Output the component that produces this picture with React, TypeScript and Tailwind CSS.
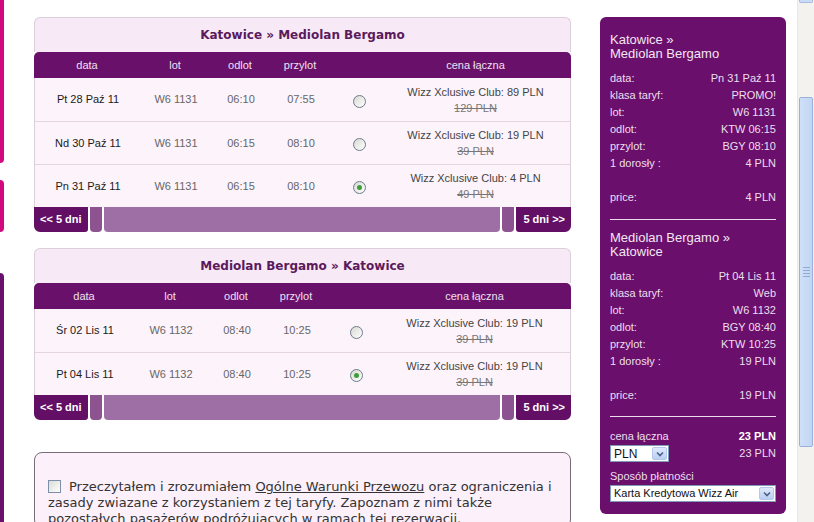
import React from 'react';

type Flight = {
  date: string;
  flight: string;
  dep: string;
  arr: string;
  price: string;
  old: string;
  selected: boolean;
};

const outbound: Flight[] = [
  { date: 'Pt 28 Paź 11', flight: 'W6 1131', dep: '06:10', arr: '07:55', price: 'Wizz Xclusive Club: 89 PLN', old: '129 PLN', selected: false },
  { date: 'Nd 30 Paź 11', flight: 'W6 1131', dep: '06:15', arr: '08:10', price: 'Wizz Xclusive Club: 19 PLN', old: '39 PLN', selected: false },
  { date: 'Pn 31 Paź 11', flight: 'W6 1131', dep: '06:15', arr: '08:10', price: 'Wizz Xclusive Club: 4 PLN', old: '49 PLN', selected: true },
];

const inbound: Flight[] = [
  { date: 'Śr 02 Lis 11', flight: 'W6 1132', dep: '08:40', arr: '10:25', price: 'Wizz Xclusive Club: 19 PLN', old: '39 PLN', selected: false },
  { date: 'Pt 04 Lis 11', flight: 'W6 1132', dep: '08:40', arr: '10:25', price: 'Wizz Xclusive Club: 19 PLN', old: '39 PLN', selected: true },
];

const arial = "font-['Liberation_Sans',Arial,sans-serif]";
const verdana = "font-['DejaVu_Sans',Verdana,sans-serif]";

function Radio({ on }: { on: boolean }) {
  return (
    <span className="flex h-[13px] w-[13px] items-center justify-center rounded-full border border-[#6c7c8c] bg-gradient-to-br from-[#d8d8d2] to-white">
      {on && <span className="h-[5px] w-[5px] rounded-full bg-[#3b9e3b]" />}
    </span>
  );
}

function FlightTable({ title, rows, cols }: { title: string; rows: Flight[]; cols: string }) {
  return (
    <div className={arial}>
      <div className={`flex h-[35px] items-center justify-center rounded-t-[6px] border-x border-t border-[#dccfda] bg-[#f7e9f5] text-[12px] font-bold text-[#5b1a5d] ${verdana}`}>
        {title}
      </div>
      <div className={`grid h-[26px] ${cols} items-center rounded-t-[5px] bg-[#69106b] text-center text-[11px] text-[#eee0ef]`}>
        <span>data</span>
        <span>lot</span>
        <span>odlot</span>
        <span>przylot</span>
        <span />
        <span className="pr-[6px]">cena łączna</span>
      </div>
      <div className="border-x border-[#dccfda] bg-[#fdf3fb]">
        {rows.map((r, i) => (
          <div key={r.date} className={`grid h-[43px] ${cols} items-center text-center text-[11px] ${i > 0 ? 'border-t border-[#e4d5e1]' : ''}`}>
            <span className="text-[#1a1a1a]">{r.date}</span>
            <span className="text-[#666]">{r.flight}</span>
            <span className="text-[#666]">{r.dep}</span>
            <span className="text-[#666]">{r.arr}</span>
            <span className="flex justify-center pt-[3px]">
              <Radio on={r.selected} />
            </span>
            <span className="flex flex-col pr-[6px] leading-[16px] text-[#444]">
              <span>{r.price}</span>
              <span className="text-[#777] line-through">{r.old}</span>
            </span>
          </div>
        ))}
      </div>
      <div className="flex h-[25px] gap-[2px] text-[11px] font-bold text-white">
        <div className="flex w-[54px] items-center rounded-bl-[6px] rounded-br-[3px] bg-[#630f66] pl-[6px]">&lt;&lt; 5 dni</div>
        <div className="w-[12px] rounded-b-[4px] bg-[#8c5390]" />
        <div className="flex-1 rounded-b-[4px] bg-[#9e6fa5]" />
        <div className="w-[12px] rounded-b-[4px] bg-[#8c5390]" />
        <div className="flex w-[55px] items-center justify-end rounded-bl-[3px] rounded-br-[6px] bg-[#630f66] pr-[6px]">5 dni &gt;&gt;</div>
      </div>
    </div>
  );
}

function Line({ label, value }: { label: string; value?: string }) {
  return (
    <div className="flex h-[17px] items-center justify-between">
      <span>{label}</span>
      <span>{value}</span>
    </div>
  );
}

function Chevron() {
  return (
    <span className="flex h-[13px] w-[15px] items-center justify-center rounded-[2px] border border-[#b5c8ec] bg-gradient-to-b from-[#dfe9fb] to-[#b9cff3]">
      <svg width="8" height="6" viewBox="0 0 8 6">
        <path d="M1 1.5 L4 4.5 L7 1.5" fill="none" stroke="#4d6185" strokeWidth="1.6" />
      </svg>
    </span>
  );
}

function Summary({ title, lines }: { title: string[]; lines: [string, string][] }) {
  return (
    <div>
      <div className="text-[13px] leading-[14px] text-[#f2e6f2]">
        {title.map(t => <div key={t}>{t}</div>)}
      </div>
      <div className="mt-[9px]">
        {lines.map(([l, v]) => <Line key={l} label={l} value={v} />)}
        <Line label="" />
      </div>
    </div>
  );
}

export default function App() {
  return (
    <div className={`flex h-[522px] w-[814px] overflow-hidden bg-white ${arial}`}>
      {/* left menu edge */}
      <div className="flex w-[4px] flex-col">
        <div className="h-[163px] rounded-br-[4px] bg-[#d2087f]" />
        <div className="mt-[17px] h-[52px] rounded-r-[4px] bg-[#d2087f]" />
        <div className="mt-[41px] flex-1 rounded-tr-[4px] bg-[#6a0f6c]" />
      </div>

      <main className="ml-[30px] w-[537px] pt-[17px]">
        <FlightTable title="Katowice » Mediolan Bergamo" rows={outbound} cols="grid-cols-[106px_70px_60px_60px_56px_1fr]" />
        <div className="mt-4">
          <FlightTable title="Mediolan Bergamo » Katowice" rows={inbound} cols="grid-cols-[100px_72px_60px_60px_58px_1fr]" />
        </div>
        <div className={`mt-8 rounded-[8px] border border-[#7b6b7a] bg-[#fcf0fa] px-[13px] pt-[25px] text-[13px] leading-[16px] text-[#333] ${verdana}`}>
          <span className="mr-[8px] inline-block h-[13px] w-[13px] translate-y-[2px] border border-[#7c8fa8] bg-gradient-to-br from-[#dcdcd4] to-white" />
          Przeczytałem i zrozumiałem <span className="underline">Ogólne Warunki Przewozu</span> oraz ograniczenia i zasady zwiazane z korzystaniem z tej taryfy. Zapoznam z nimi także pozostałych pasażerów podróżujących w ramach tej rezerwacji.
        </div>
      </main>

      <aside className="ml-[29px] mt-[17px] h-[497px] w-[186px] rounded-[6px] bg-[#6a0f6c] px-[10px] pt-[16px] text-[11px] text-[#ecdfec]">
        <Summary
          title={['Katowice »', 'Mediolan Bergamo']}
          lines={[
            ['data:', 'Pn 31 Paź 11'],
            ['klasa taryf:', 'PROMO!'],
            ['lot:', 'W6 1131'],
            ['odlot:', 'KTW 06:15'],
            ['przylot:', 'BGY 08:10'],
            ['1 dorosły :', '4 PLN'],
          ]}
        />
        <Line label="price:" value="4 PLN" />
        <div className="mb-[11px] mt-[13px] h-px bg-[#eadcea]" />
        <Summary
          title={['Mediolan Bergamo »', 'Katowice']}
          lines={[
            ['data:', 'Pt 04 Lis 11'],
            ['klasa taryf:', 'Web'],
            ['lot:', 'W6 1132'],
            ['odlot:', 'BGY 08:40'],
            ['przylot:', 'KTW 10:25'],
            ['1 dorosły :', '19 PLN'],
          ]}
        />
        <Line label="price:" value="19 PLN" />
        <div className="mt-[12px] h-px bg-[#eadcea]" />
        <div className="mt-[11px] flex h-[17px] items-center justify-between">
          <span>cena łączna</span>
          <span className="text-[11px] font-bold text-white">23 PLN</span>
        </div>
        <div className="flex items-center justify-between">
          <div className="flex h-[17px] w-[59px] items-center justify-between border border-[#7f9db9] bg-white pl-[3px] pr-px text-[12px] text-[#111]">
            <span>PLN</span>
            <Chevron />
          </div>
          <span>23 PLN</span>
        </div>
        <div className="mt-[6px] flex h-[17px] items-center">Sposób płatności</div>
        <div className="flex h-[17px] items-center justify-between border border-[#7f9db9] bg-white pl-[3px] pr-px text-[11px] text-[#111]">
          <span>Karta Kredytowa Wizz Air</span>
          <Chevron />
        </div>
      </aside>

      {/* window scrollbar */}
      <div className="ml-[11px] flex w-[17px] flex-col border-l border-[#ebe8e2] bg-[#f4f2ee]">
        <div className="mx-px h-[3px] rounded-b-[2px] border-x border-b border-[#a9bde0] bg-[#c9dbf6]" />
        <div className="mx-px mt-[94px] flex h-[350px] flex-col items-center justify-center gap-[2px] rounded-[2px] border border-[#98b2dc] bg-gradient-to-r from-[#cfe0f8] to-[#c2d6f4]">
          <span className="h-px w-[7px] bg-[#8fa9d3]" />
          <span className="h-px w-[7px] bg-[#8fa9d3]" />
          <span className="h-px w-[7px] bg-[#8fa9d3]" />
          <span className="h-px w-[7px] bg-[#8fa9d3]" />
        </div>
      </div>
    </div>
  );
}
